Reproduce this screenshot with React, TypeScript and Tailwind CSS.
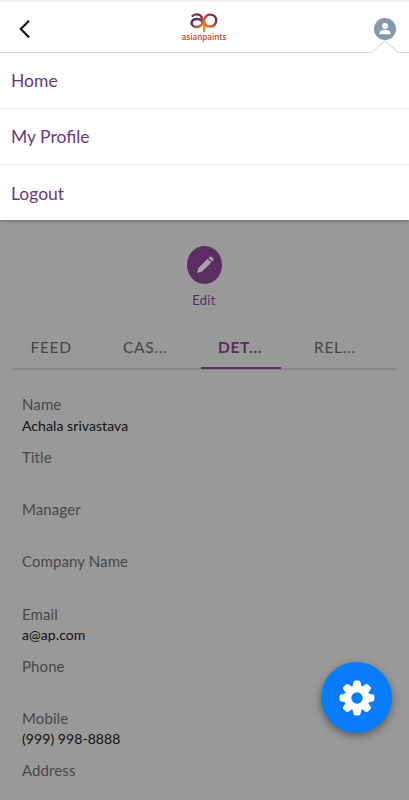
import React from "react";
import { clsx } from "clsx";

interface Field {
    label: string;
    value?: string;
}

const menuItems = [
    { label: "Home", className: "h-[55px] pt-[2px]" },
    { label: "My Profile", className: "h-[56px] border-t border-[#e9e9e9] pt-[2px]" },
    { label: "Logout", className: "h-[56px] border-t border-[#e9e9e9] pt-[3px]" },
];

const tabs = [
    { label: "FEED", className: "w-[92px] pl-[17.5px]" },
    { label: "CAS...", className: "w-[96px] pl-[18px]" },
    { label: "DET...", className: "w-[80px] pl-[17px]", active: true },
    { label: "REL...", className: "w-[114px] pl-[33px]" },
];

const fields: Field[] = [
    { label: "Name", value: "Achala srivastava" },
    { label: "Title" },
    { label: "Manager" },
    { label: "Company Name" },
    { label: "Email", value: "a@ap.com" },
    { label: "Phone" },
    { label: "Mobile", value: "(999) 998-8888" },
    { label: "Address" },
];

const teeth = [0, 45, 90, 135, 180, 225, 270, 315];

const Logo: React.FC = () => (
    <div className="flex flex-col items-center">
        <svg width="28" height="20" viewBox="0 0 28 20" fill="none" strokeLinecap="round">
            <defs>
                <linearGradient id="leftLoop" x1="0" y1="0" x2="14" y2="14" gradientUnits="userSpaceOnUse">
                    <stop offset="0" stopColor="#e85a24" />
                    <stop offset="0.35" stopColor="#47246f" />
                    <stop offset="0.65" stopColor="#a03a50" />
                    <stop offset="1" stopColor="#f59a23" />
                </linearGradient>
                <linearGradient id="rightLoop" x1="14" y1="14" x2="27" y2="3" gradientUnits="userSpaceOnUse">
                    <stop offset="0" stopColor="#f08a22" />
                    <stop offset="0.45" stopColor="#d9432b" />
                    <stop offset="1" stopColor="#47246f" />
                </linearGradient>
            </defs>
            <path
                d="M2.6 2.8C5.5.6 9.8.8 11.6 4c1.4 2.8 1 6.6 3 9.6M12.2 9.6C12 7.4 9.8 6 7.2 6 4.2 6 1.6 7.4 1.6 10c0 2.4 2.2 4 5 4 3.2 0 5.2-1.8 6.6-4.6"
                stroke="url(#leftLoop)"
                strokeWidth="2.4"
            />
            <path
                d="M14.2 18.2V8.4C14.2 4 16.8 1.6 20 1.6c3.8 0 6.2 2.5 6.2 5.7 0 3.7-2.6 6.3-6.2 6.3-3.3 0-4.8-1.9-5.8-4.4"
                stroke="url(#rightLoop)"
                strokeWidth="2.4"
            />
        </svg>
        <span className="-mt-[1px] font-['Open_Sans',sans-serif] text-[8px] font-semibold leading-[10px] tracking-[0.02px] text-[#c8402f]">
            asianpaints
        </span>
    </div>
);

const Header: React.FC = () => (
    <header className="flex h-[53px] items-center justify-between border-t-2 border-b border-t-[#f1f1f1] border-b-[#d8d8d8] bg-white pr-[13px] pl-[18px]">
        <svg className="mt-[3px]" width="24" height="24" viewBox="0 0 24 24" fill="none" stroke="#111" strokeWidth="2.2">
            <path d="M11 3.8 2.8 12 11 20.2" />
        </svg>
        <div className="ml-[-8px] pt-[1px]">
            <Logo />
        </div>
        <div className="relative mt-1 size-[22px]">
            <svg width="22" height="22" viewBox="0 0 22 22">
                <circle cx="11" cy="11" r="11" fill="#8299ae" />
                <circle cx="11" cy="8.1" r="3" fill="#fff" />
                <path d="M5.4 15.6c0-2.5 2.6-3.8 5.6-3.8s5.6 1.3 5.6 3.8v.6H5.4z" fill="#fff" />
            </svg>
            {/* Menu pointer */}
            <svg className="absolute top-[22px] left-[-2px]" width="26" height="14" viewBox="0 0 26 14">
                <path d="M0 12.5 13 .5l13 12V14H0z" fill="#fff" />
                <path d="M0 12.5 13 .5l13 12" fill="none" stroke="#c9c9c9" />
            </svg>
        </div>
    </header>
);

const Menu: React.FC = () => (
    <nav className="relative h-[167px] bg-white shadow-[0_1px_4px_rgba(0,0,0,0.3)] [clip-path:inset(0_0_-10px_0)]">
        {menuItems.map((item) => (
            <div
                key={item.label}
                className={clsx("flex items-center pl-[11px] text-[17.5px] text-[#6a3a7c]", item.className)}
            >
                {item.label}
            </div>
        ))}
    </nav>
);

export default function App() {
    return (
        <div className="relative h-[800px] w-full overflow-hidden bg-[#999999] font-[Lato,sans-serif]">
            <Header />
            <Menu />

            {/* Edit action */}
            <div className="flex flex-col items-center pt-[26px]">
                <div className="flex h-[38px] w-[35px] items-center justify-center rounded-[50%] bg-[#5b2d63]">
                    <svg width="20" height="20" viewBox="0 0 20 20" fill="#aaa1ac">
                        <path d="m2 18 1.4-5L12.7 3.8l3.6 3.6L7 16.6z" />
                        <path d="m13.5 3 1.1-1.1c.7-.7 1.5-.7 2.2 0l1.4 1.4c.7.7.7 1.5 0 2.2l-1.1 1.1z" />
                    </svg>
                </div>
                <span className="mt-[8px] mr-[1px] text-[13px] leading-[17px] tracking-[0.3px] text-[#5b2d63]">Edit</span>
            </div>

            {/* Tabs */}
            <div className="mx-[13px] mt-[20px] flex h-[41px] border-b-2 border-[#878787] text-[15.5px] leading-[19px] tracking-[0.7px] text-[#464646]">
                {tabs.map((tab) => (
                    <div
                        key={tab.label}
                        className={clsx(
                            "h-[40px] shrink-0 pt-[9px]",
                            tab.className,
                            tab.active && "border-b-2 border-[#5b2d63] font-bold text-[#5b2d63]"
                        )}
                    >
                        {tab.label}
                    </div>
                ))}
            </div>

            {/* Contact details */}
            <div className="pt-[24.4px] pl-[22px]">
                {fields.map((field) => (
                    <div key={field.label} className="h-[52.3px]">
                        <div className="text-[15px] leading-[20px] tracking-[0.1px] text-[#484848]">{field.label}</div>
                        {field.value && (
                            <div className="mt-[1.3px] text-[14px] leading-[20px] tracking-[0.07px] text-[#111]">
                                {field.value}
                            </div>
                        )}
                    </div>
                ))}
            </div>

            {/* Settings button */}
            <button
                aria-label="Settings"
                className="absolute top-[662px] left-[321px] flex size-[71px] items-center justify-center rounded-full bg-[#087cfb] shadow-[0_3px_8px_rgba(0,0,0,0.4)]"
            >
                <svg width="36" height="36" viewBox="-18 -18 36 36">
                    {teeth.map((angle) => (
                        <path
                            key={angle}
                            transform={`rotate(${angle})`}
                            d="M-4.6-11-3.5-15.8Q-3.1-17.4-1.8-17.4H1.8Q3.1-17.4 3.5-15.8L4.6-11z"
                            fill="#fff"
                        />
                    ))}
                    <circle r="9.1" fill="none" stroke="#fff" strokeWidth="6.8" />
                </svg>
            </button>
        </div>
    );
}
